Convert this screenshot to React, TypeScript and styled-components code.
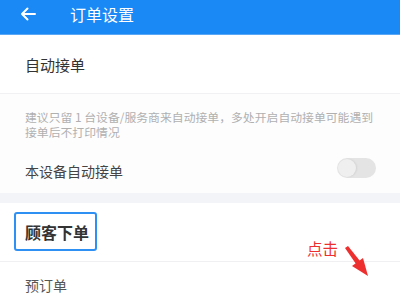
import React from "react";
import styled, { createGlobalStyle } from "styled-components";

const Global = createGlobalStyle`
  html, body { margin: 0; padding: 0; background: #ffffff; }
  body { font-family: "Noto Sans CJK SC", "Noto Sans", sans-serif; }
`;

const Page = styled.div`
  position: relative;
  width: 400px;
  height: 300px;
  overflow: hidden;
  background: #ffffff;
`;

const Header = styled.header`
  height: 35px;
  background: #1a88f5;
  display: flex;
  align-items: center;
  padding-left: 20px;
  box-sizing: border-box;
  border-bottom: 1px solid #5aa8f5;
`;

const Title = styled.div`
  margin-left: 34px;
  color: #ffffff;
  font-size: 16px;
  line-height: 20px;
  margin-top: -6px;
`;

const BackIcon = styled.svg`
  display: block;
  margin-top: -6px;
`;

const SectionTitleRow = styled.div`
  height: 59px;
  box-sizing: border-box;
  padding: 0 25px 0;
  display: flex;
  align-items: center;
  font-size: 15px;
  color: #333333;
  border-bottom: 1px solid #f1f1f4;
`;

const Desc = styled.div`
  padding: 15px 25px 0;
  font-size: 11.85px;
  line-height: 15px;
  color: #b0b0b0;
  white-space: nowrap;
  background: #fdfdfe;
`;

const SwitchRow = styled.div`
  display: flex;
  align-items: center;
  justify-content: space-between;
  padding: 19px 24px 9px 25px;
  font-size: 14px;
  line-height: 20px;
  color: #444444;
  background: #fdfdfe;
`;

const Toggle = styled.div`
  width: 39px;
  height: 20px;
  border-radius: 10px;
  background: #e4e4e4;
  margin-bottom: 6px;
  display: flex;
  align-items: center;
  padding-left: 1px;
  box-sizing: border-box;
`;

const Knob = styled.div`
  width: 18px;
  height: 18px;
  border-radius: 50%;
  background: #efefef;
  box-shadow: 1px 0 2px rgba(0, 0, 0, 0.08);
`;

const Band = styled.div`
  height: 10px;
  background: #f3f4f7;
`;

const Section = styled.div`
  padding-top: 9px;
`;

const HighlightBox = styled.div`
  margin-left: 14px;
  width: 83px;
  height: 39px;
  box-sizing: border-box;
  border: 2px solid #2f90f3;
  border-radius: 3px;
  display: flex;
  align-items: center;
  padding-left: 9px;
  font-size: 16px;
  font-weight: 700;
  color: #333333;
`;

const Divider = styled.div`
  margin-top: 10px;
  height: 1px;
  background: #f0f0f2;
`;

const ItemRow = styled.div`
  padding: 13px 25px 0;
  font-size: 14px;
  line-height: 20px;
  color: #555555;
`;

const Hint = styled.div`
  position: absolute;
  left: 307px;
  top: 238px;
  font-size: 15.5px;
  line-height: 20px;
  color: #ee2f2f;
`;

const Pointer = styled.svg`
  position: absolute;
  left: 0;
  top: 0;
  pointer-events: none;
`;

export default function App() {
  return (
    <Page>
      <Global />
      <Header>
        <BackIcon width="16" height="14" viewBox="0 0 16 14">
          <path d="M15 7H2M7.5 1.5L2 7l5.5 5.5" fill="none" stroke="#ffffff" strokeWidth="2" strokeLinecap="round" strokeLinejoin="round" />
        </BackIcon>
        <Title>订单设置</Title>
      </Header>
      <SectionTitleRow>自动接单</SectionTitleRow>
      <Desc>
        建议只留 1 台设备/服务商来自动接单，多处开启自动接单可能遇到
        <br />
        接单后不打印情况
      </Desc>
      <SwitchRow>
        <span>本设备自动接单</span>
        <Toggle>
          <Knob />
        </Toggle>
      </SwitchRow>
      <Band />
      <Section>
        <HighlightBox>顾客下单</HighlightBox>
        <Divider />
        <ItemRow>预订单</ItemRow>
      </Section>
      <Hint>点击</Hint>
      <Pointer width="400" height="300" viewBox="0 0 400 300">
        <polygon points="345,248 348,246 360,261 356,264" fill="#ee2f2f" />
        <polygon points="352,266 363,258 368,276" fill="#ee2f2f" />
      </Pointer>
    </Page>
  );
}
